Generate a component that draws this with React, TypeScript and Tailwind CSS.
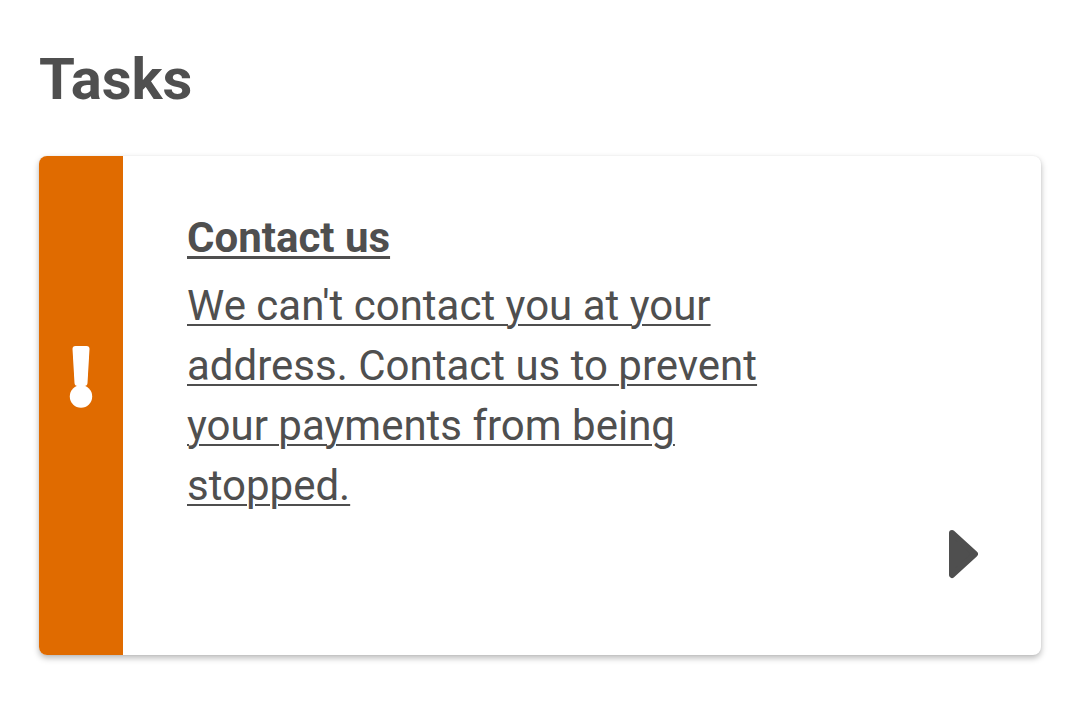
const AlertMark = () => (
  <svg width="24" height="62" viewBox="0 0 24 62" fill="#ffffff">
    <path d="M3.5 3 Q3.5 0 6.5 0 H17.5 Q20.5 0 20.5 3 L18.5 37 Q18.3 40 15.5 40 H8.5 Q5.7 40 5.5 37 Z" />
    <circle cx="12" cy="50.5" r="11.2" />
  </svg>
);

const Caret = () => (
  <svg width="30" height="52" viewBox="0 0 30 52">
    <polygon
      points="4,5 27,26 4,47"
      fill="#4f4f4f"
      stroke="#4f4f4f"
      strokeWidth="6"
      strokeLinejoin="round"
    />
  </svg>
);

const TaskCard = ({ title, body }: { title: string; body: string }) => {
  return (
    <a href="#" className="flex rounded-[8px] bg-white shadow-[0_3px_6px_rgba(0,0,0,0.28),0_0_2px_rgba(0,0,0,0.06)] overflow-hidden">
      <div className="w-[84px] shrink-0 bg-[#e06b00] flex justify-center pt-[190px]">
        <AlertMark />
      </div>
      <div className="flex-1 flex flex-col pl-[64px] pr-[63px] pt-[52px] pb-[75px]">
        <h2 className="text-[42px] leading-[60px] font-bold text-[#4f4f4f] underline decoration-[3px] underline-offset-[4px] self-start">
          {title}
        </h2>
        <p className="mt-[8px] max-w-[590px] text-[42px] leading-[60px] text-[#4f4f4f] underline decoration-[2px] underline-offset-[4px]">
          {body}
        </p>
        <div className="flex justify-end mt-[12px]">
          <Caret />
        </div>
      </div>
    </a>
  );
};

export default function App() {
  return (
    <div className="min-h-[727px] bg-white px-[39px] pt-[50px] font-['Roboto',sans-serif]">
      <h1 className="text-[58px] leading-none font-bold text-[#4f4f4f] mb-[48px]">Tasks</h1>
      <TaskCard
        title="Contact us"
        body="We can't contact you at your address. Contact us to prevent your payments from being stopped."
      />
    </div>
  );
}
